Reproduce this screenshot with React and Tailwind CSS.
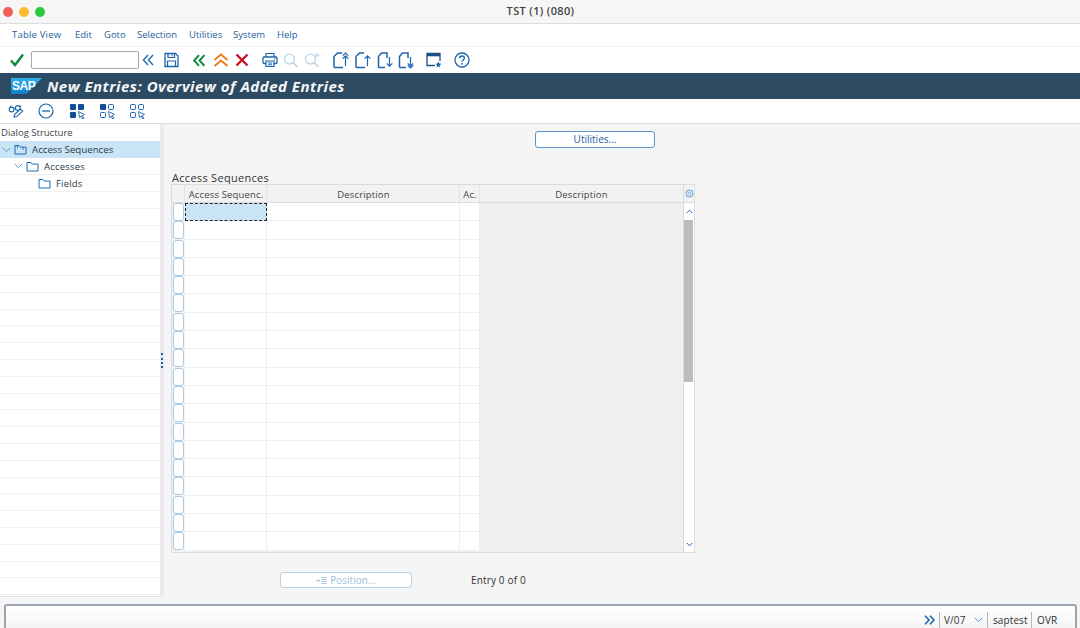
import React from "react";

const BL = "#1f6fb5";
const Svg = ({ w = 18, h = 18, vb, className = "", children }) => (
  <svg width={w} height={h} viewBox={vb || `0 0 ${w} ${h}`} fill="none" className={`shrink-0 ${className}`}>{children}</svg>
);

const Check = () => <Svg w={16} h={16}><path d="M2 8.5 6 13 14 2.5" stroke="#0f8a3c" strokeWidth="2.4" /></Svg>;
const DblLeft = ({ c = BL, sw = 1.5, w = 12, h = 12 }) => (
  <Svg w={w} h={h} vb="0 0 12 12"><path d="M6 1 1.5 6 6 11M11 1 6.5 6 11 11" stroke={c} strokeWidth={sw} /></Svg>
);
const Save = () => (
  <Svg w={15} h={16}>
    <path d="M1 1.5h10.5L14 4v10.5H1z" stroke="#1d63ad" strokeWidth="1.3" />
    <path d="M4 1.5v4h6.5v-4M3.5 14.5V9h8v5.5" stroke="#1d63ad" strokeWidth="1.2" />
    <path d="M8 2.5v2" stroke="#1d63ad" />
  </Svg>
);
const Up2 = () => (
  <Svg w={16} h={14}><path d="M1.5 7 8 1.5 14.5 7M1.5 13 8 7.5 14.5 13" stroke="#ee7a1e" strokeWidth="1.8" /></Svg>
);
const Cross = () => (
  <Svg w={14} h={14}><path d="M1.5 1.5 12.5 12.5M12.5 1.5 1.5 12.5" stroke="#c8141e" strokeWidth="2.4" /></Svg>
);
const Printer = () => (
  <Svg w={16} h={16}>
    <path d="M4 5V1.5h8V5" stroke="#1d63ad" strokeWidth="1.2" />
    <rect x="1" y="5" width="14" height="6.5" rx="1.2" stroke="#1d63ad" strokeWidth="1.3" />
    <path d="M4 9h8v5.5H4z" fill="#fff" stroke="#1d63ad" strokeWidth="1.2" />
    <path d="M6 11h4M6 12.8h4" stroke="#1d63ad" />
    <path d="M12 7h1.5" stroke="#1d63ad" />
  </Svg>
);
const Find = ({ plus }) => (
  <Svg w={16} h={16}>
    <circle cx="6.5" cy="7" r="5" stroke="#b5d2ea" strokeWidth="1.2" />
    <path d="m10 10.5 4.5 4.5" stroke="#b5d2ea" strokeWidth="1.4" />
    {plus && <path d="M13 .5v5M10.5 3h5" stroke="#b5d2ea" />}
  </Svg>
);
const Page = ({ dir, dbl }) => {
  const up = dir === "up";
  return (
    <Svg w={16} h={17}>
      {up ? (
        <path d="M1 15.5V4.5L4.5 1H9M1 15.5h9" stroke="#1d63ad" strokeWidth="1.5" />
      ) : (
        <path d="M1.5 15.5V4.5L4.5 1h5.5v5M1.5 15.5H8" stroke="#1d63ad" strokeWidth="1.5" />
      )}
      {up ? (
        <>
          <path d="M12.5 14V4M9.7 6.7l2.8-2.8 2.8 2.8" stroke="#1d63ad" strokeWidth="1.2" />
          {dbl && <path d="M9.7 3.7 12.5 1l2.8 2.7" stroke="#1d63ad" strokeWidth="1.1" />}
        </>
      ) : (
        <>
          <path d="M12.5 5v9M9.7 11.3l2.8 2.8 2.8-2.8" stroke="#1d63ad" strokeWidth="1.2" />
          {dbl && <path d="M9.7 13.3l2.8 2.7 2.8-2.7" stroke="#1d63ad" strokeWidth="1.1" />}
        </>
      )}
    </Svg>
  );
};
const Win = () => (
  <Svg w={16} h={16}>
    <path d="M9 13.5H1V1.5h13V9" stroke="#1d4f86" strokeWidth="1.3" />
    <rect x="1" y="1.5" width="13" height="2.8" fill="#1d4f86" />
    <path d="m12.4 9.6.9 2 2.2.2-1.7 1.4.5 2.2-1.9-1.2-1.9 1.2.5-2.2-1.7-1.4 2.2-.2z" fill="#1d63ad" />
  </Svg>
);
const Help = () => (
  <Svg w={16} h={16}>
    <circle cx="8" cy="8" r="7" stroke="#1d63ad" strokeWidth="1.3" />
    <path d="M5.6 6.2C5.6 4.8 6.7 4 8 4s2.4.8 2.4 2.1c0 1.8-2.4 1.8-2.4 3.7" stroke="#1d63ad" strokeWidth="1.3" />
    <circle cx="8" cy="11.8" r=".9" fill="#1d63ad" />
  </Svg>
);
const Glasses = () => (
  <Svg w={16} h={16}>
    <circle cx="3.6" cy="6.5" r="2.4" stroke="#1d63ad" strokeWidth="1.1" />
    <circle cx="9.8" cy="5" r="2.4" stroke="#1d63ad" strokeWidth="1.1" />
    <path d="M6 6c.4-.4.9-.6 1.4-.7M1.4 5.5 3 2.5M12 4l.5-1.5" stroke="#1d63ad" />
    <path d="m6 14 .5-2.5L12.5 6l2.2 2-6 5.6z" fill="#fff" stroke="#1d63ad" strokeWidth="1.1" />
  </Svg>
);
const Minus = () => (
  <Svg w={16} h={16}>
    <circle cx="8" cy="8" r="7" stroke="#1d63ad" strokeWidth="1.2" />
    <path d="M4 8h8" stroke="#1d63ad" strokeWidth="1.3" />
  </Svg>
);
const Cursor = () => <path d="m9.5 8.5 6 3-2.3 1 1.7 3-1.3.5-1.5-3-1.6 1.5z" fill="#fff" stroke="#1d63ad" strokeWidth=".9" />;
const Sq = ({ x, y, on }) =>
  on ? <rect x={x} y={y} width="6" height="6" rx="1" fill="#0f4f99" /> : <rect x={x + 0.5} y={y + 0.5} width="5" height="5" rx="1" stroke="#1d63ad" strokeWidth="1" />;
const Sel = ({ on }) => (
  <Svg w={17} h={16}>
    <Sq x={1} y={1} on={on[0]} />
    <Sq x={9} y={1} on={on[1]} />
    <Sq x={1} y={9} on={on[2]} />
    <Cursor />
  </Svg>
);
const Chev = ({ c = "#5d9bd2" }) => <Svg w={9} h={6}><path d="M.7.8 4.5 4.6 8.3.8" stroke={c} strokeWidth="1" /></Svg>;
const Folder = ({ open }) => (
  <Svg w={13} h={11}>
    <path d="M1 10V1.5h4l1.2 1.6H12V10z" stroke="#1d6bb5" strokeWidth="1" />
    {open && <path d="M3.5 1v3.5M9 3v3" stroke="#1d6bb5" strokeWidth=".8" />}
  </Svg>
);
const SapLogo = () => (
  <svg width="31" height="16" viewBox="0 0 31 16" className="shrink-0">
    <defs>
      <linearGradient id="sapg" x1="0" x2="0" y1="0" y2="1">
        <stop offset="0" stopColor="#2fb2ee" />
        <stop offset="1" stopColor="#0f7fc8" />
      </linearGradient>
    </defs>
    <path d="M0 0h31L15.500 16H0z" fill="url(#sapg)" />
    <text x="1" y="12" fontFamily="'Liberation Sans',sans-serif" fontSize="12" fontWeight="700" fill="#fff" letterSpacing="-.4">SAP</text>
  </svg>
);

const font = "font-['Open_Sans','Noto_Sans',sans-serif]";
const ROWS = Array.from({ length: 19 });
const TREE = Array.from({ length: 26 });
const MENU = [
  ["Table View", "w-[63px] tracking-[.2px]"],
  ["Edit", "w-[29px]"],
  ["Goto", "w-[33px]"],
  ["Selection", "w-[52px]"],
  ["Utilities", "w-[44px]"],
  ["System", "w-[44px]"],
  ["Help", "w-[30px]"],
];
const GRID = "grid grid-cols-[13px_82px_193px_20px_1fr]";

export default function App() {
  return (
    <div className={`${font} w-[1080px] h-[628px] overflow-hidden flex flex-col bg-[#f5f5f5] text-[#333]`}>
      {/* Title */}
      <div className="h-[24px] shrink-0 bg-[#f6f6f6] border-b border-[#dcdcdc] relative flex items-center justify-center pl-[1px]">
        <div className="absolute left-[3px] top-[7px] flex gap-[6px]">
          <span className="w-[10px] h-[10px] rounded-full bg-[#f25f57]" />
          <span className="w-[10px] h-[10px] rounded-full bg-[#f9bc2e]" />
          <span className="w-[10px] h-[10px] rounded-full bg-[#28c83f]" />
        </div>
        <span className="text-[11px] font-semibold text-[#444] tracking-[.35px]">TST (1) (080)</span>
      </div>
      {/* Menu */}
      <div className="h-[23px] shrink-0 bg-white flex items-center pl-[12px] border-b border-[#f0f0f0]">
        {MENU.map(([m, w]) => (
          <span key={m} className={`${w} text-[9.5px] text-[#22609f] whitespace-nowrap`}>{m}</span>
        ))}
      </div>
      {/* Toolbar */}
      <div className="h-[26px] shrink-0 bg-white flex items-center pl-[9px]">
        <Check />
        <div className="ml-[6px] w-[108px] h-[18px] border border-[#a9a9a9] rounded-[2px] bg-white" />
        <div className="ml-[3px]"><DblLeft /></div>
        <div className="ml-[10px]"><Save /></div>
        <div className="ml-[13px]"><DblLeft c="#0f8a3c" sw={1.8} w={14} h={13} /></div>
        <div className="ml-[7px]"><Up2 /></div>
        <div className="ml-[6px]"><Cross /></div>
        <div className="ml-[13px]"><Printer /></div>
        <div className="ml-[5px]"><Find /></div>
        <div className="ml-[5px]"><Find plus /></div>
        <div className="ml-[13px]"><Page dir="up" dbl /></div>
        <div className="ml-[6px]"><Page dir="up" /></div>
        <div className="ml-[6px]"><Page dir="down" /></div>
        <div className="ml-[5px]"><Page dir="down" dbl /></div>
        <div className="ml-[12px]"><Win /></div>
        <div className="ml-[12px]"><Help /></div>
      </div>
      {/* SAP header */}
      <div className="h-[26px] shrink-0 bg-[#2c4a62] flex items-center pl-[11px]">
        <SapLogo />
        <span className="ml-[5px] font-['Open_Sans',sans-serif] text-[15px] font-bold italic text-[#f4f6f8] whitespace-nowrap tracking-[.5px]">
          New Entries: Overview of Added Entries
        </span>
      </div>
      {/* App toolbar */}
      <div className="h-[25px] shrink-0 bg-white flex items-center pl-[8px] border-b border-[#dcdcdc]">
        <Glasses />
        <div className="ml-[14px]"><Minus /></div>
        <div className="ml-[15px]"><Sel on={[1, 1, 1]} /></div>
        <div className="ml-[13px]"><Sel on={[1, 0, 0]} /></div>
        <div className="ml-[13px]"><Sel on={[0, 0, 0]} /></div>
      </div>
      {/* Main */}
      <div className="h-[480px] shrink-0 flex">
        <div className="w-[160px] h-[473px] bg-white border-b border-[#e2e2e2] flex flex-col overflow-hidden">
          <div className="h-[17px] shrink-0 flex items-center text-[9.5px] text-[#444] pt-[2px] pl-[1px]">Dialog Structure</div>
          <div className="h-[17px] shrink-0 bg-[#c9e5f5] flex items-center pl-[2px] text-[9.7px] text-[#2a3a4a]">
            <Chev /><span className="ml-[3px]"><Folder open /></span><span className="ml-[5px] pt-[2px]">Access Sequences</span>
          </div>
          <div className="h-[17px] shrink-0 border-b border-[#f0f0f0] flex items-center pl-[14px] text-[9.5px] tracking-[.2px] text-[#2a3a4a]">
            <Chev /><span className="ml-[3px]"><Folder /></span><span className="ml-[5px] pt-[2px]">Accesses</span>
          </div>
          <div className="h-[17px] shrink-0 border-b border-[#f0f0f0] flex items-center pl-[38px] text-[9.5px] tracking-[.2px] text-[#2a3a4a]">
            <Folder /><span className="ml-[5px] pt-[2px]">Fields</span>
          </div>
          {TREE.map((_, i) => (
            <div key={i} className="h-[16.8px] shrink-0 border-b border-[#f0f0f0]" />
          ))}
        </div>
        <div className="w-[4px] h-[473px] bg-[#ebebee] relative">
          <div className="absolute left-[1px] top-[229px] w-[2px] h-[15px] border-l-2 border-dotted border-[#1d63ad]" />
        </div>
        <div className="flex-1 flex flex-col items-start pl-[7px]">
          <div className="self-start ml-[364px] mt-[7px] w-[120px] h-[17px] bg-white border border-[#5b93cd] rounded-[3px] flex items-center justify-center text-[10px] text-[#22609f]">
            Utilities...
          </div>
          <div className="ml-[1px] mt-[23px] h-[13px] text-[11px] leading-[14px] text-[#333] tracking-[.3px]">Access Sequences</div>
          <div className="w-[524px] h-[369px] border border-[#dcdcdc] bg-[#f2f2f2] flex">
            <div className="flex-1 flex flex-col">
              <div className={`${GRID} h-[18px] text-[9.5px] tracking-[.15px] text-[#444] border-b border-[#dcdcdc] text-center`}>
                <div className="border-r border-[#e4e4e4]" />
                <div className="border-r border-[#e4e4e4] pt-[3px] pl-[1px] flex items-center justify-center whitespace-nowrap">Access Sequenc.</div>
                <div className="border-r border-[#e4e4e4] pt-[3px] pl-[1px] flex items-center justify-center">Description</div>
                <div className="border-r border-[#e4e4e4] pt-[3px] pl-[1px] flex items-center justify-center">Ac.</div>
                <div className="flex pt-[3px] items-center justify-center">Description</div>
              </div>
              {ROWS.map((_, i) => (
                <div key={i} className={`${GRID} h-[18.3px] shrink-0`}>
                  <div className="relative bg-[#f2f2f2]">
                    <div className="absolute left-[1px] top-0 w-[11px] h-[18px] bg-white border border-[#a9cbe8] rounded-[3px]" />
                  </div>
                  <div className={`${i === 0 ? "bg-[#c9e5f5] border border-dashed border-[#222]" : "bg-white border-r border-b border-[#eeeeee]"}`} />
                  <div className="bg-white border-r border-b border-[#eeeeee]" />
                  <div className="bg-white border-r border-b border-[#eeeeee]" />
                  <div className="bg-[#f0f0f0] border-b border-[#ebebeb]" />
                </div>
              ))}
            </div>
            <div className="w-[11px] flex flex-col border-l border-[#dcdcdc]">
              <div className="h-[18px] flex items-center justify-center border-b border-[#dcdcdc]">
                <Svg w={9} h={9}>
                  <circle cx="4.5" cy="4.5" r="3.6" stroke="#5d9bd2" strokeWidth="1" />
                  <circle cx="4.5" cy="4.5" r="1.5" stroke="#5d9bd2" strokeWidth=".8" />
                </Svg>
              </div>
              <div className="flex-1 flex flex-col bg-white">
                <div className="h-[17px] flex items-center justify-center">
                  <Svg w={7} h={5}><path d="M.8 4 3.5 1.2 6.2 4" stroke="#1d63ad" strokeWidth="1" /></Svg>
                </div>
                <div className="h-[162px] bg-[#bcbcbc] mr-[1px]" />
                <div className="flex-1" />
                <div className="h-[15px] flex items-center justify-center">
                  <Svg w={7} h={5}><path d="M.8 1 3.5 3.8 6.2 1" stroke="#1d63ad" strokeWidth="1" /></Svg>
                </div>
              </div>
            </div>
          </div>
          <div className="mt-[19px] flex items-center">
            <div className="ml-[109px] w-[132px] h-[16px] bg-white border border-[#b5d2ea] rounded-[3px] flex items-center justify-center gap-[3px] text-[10px] text-[#9cc0e0]">
              <Svg w={11} h={7}>
                <path d="M0 3.5h3.500M2.200 2l1.500 1.500L2.200 5M5 .5h6M5 2.500h6M5 4.500h6M5 6.500h6" stroke="#9cc0e0" strokeWidth=".8" />
              </Svg>
              Position...
            </div>
            <div className="ml-[59px] text-[10px] text-[#333] tracking-[.15px] whitespace-nowrap">Entry 0 of 0</div>
          </div>
        </div>
      </div>
      {/* Status */}
      <div className="flex-1 ml-[4px] mr-[3px] pr-[5px] border-t-2 border-l-2 border-r-2 border-[#9aa5b1] rounded-t-[3px] bg-linear-to-b from-white to-[#f3f3f3] flex items-center justify-end text-[10px] text-[#333] tracking-[.1px]">
        <div className="flex items-center h-[18px] mt-[5px]">
          <DblRight />
          <div className="ml-[4px] h-[16px] border-l border-[#b8b8b8] pl-[4px] flex items-center w-[48px]">V/07<span className="ml-auto mr-[4px]"><Chev /></span></div>
          <div className="h-[16px] border-l border-[#b8b8b8] pl-[5px] flex items-center w-[44px]">saptest</div>
          <div className="h-[16px] border-l border-[#b8b8b8] pl-[5px] flex items-center w-[39px]">OVR</div>
        </div>
      </div>
    </div>
  );
}

function DblRight() {
  return <Svg w={11} h={10}><path d="M1 .8 5 5 1 9.2M6 .8 10 5 6 9.2" stroke="#1d63ad" strokeWidth="1.6" /></Svg>;
}
